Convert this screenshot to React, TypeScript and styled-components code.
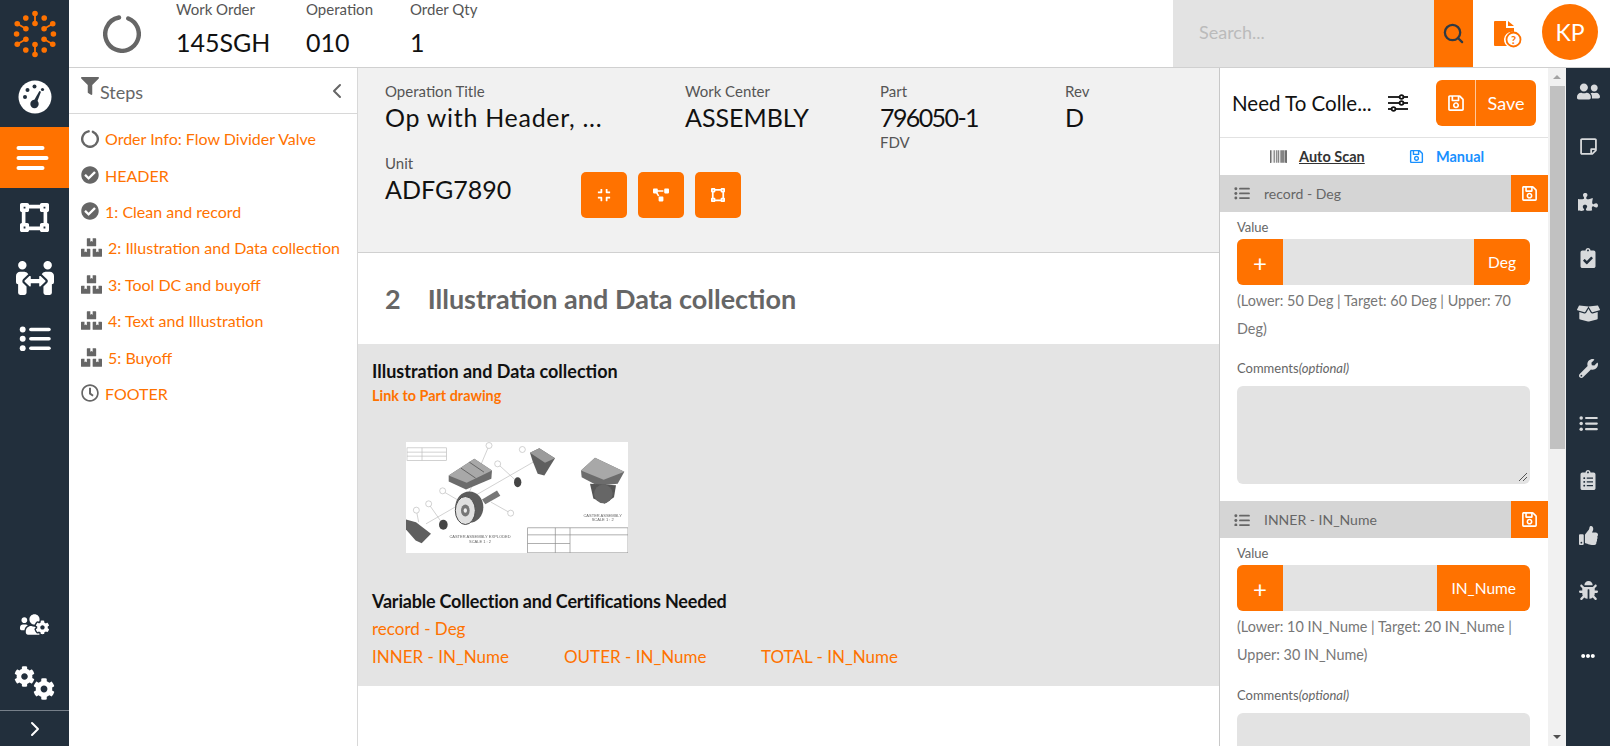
import React from 'react';
import styled, { createGlobalStyle } from 'styled-components';
import {
  FaBarcode,
  FaBoxes,
  FaBoxOpen,
  FaBug,
  FaCheckCircle,
  FaClipboardCheck,
  FaClipboardList,
  FaCog,
  FaCompress,
  FaEllipsisH,
  FaFilter,
  FaPeopleArrows,
  FaProjectDiagram,
  FaPuzzlePiece,
  FaRegClock,
  FaRegSave,
  FaRegStickyNote,
  FaThumbsUp,
  FaUserFriends,
  FaUsersCog,
  FaVectorSquare,
  FaWrench
} from 'react-icons/fa';
import { ChevronLeft, ChevronRight, Search } from 'lucide-react';

const ORANGE = '#ff7200';
const NAVY = '#222f3c';
const FONT = '"Lato", "Open Sans", sans-serif';

const GlobalStyle = createGlobalStyle`
  html, body, #root { margin: 0; padding: 0; height: 100%; }
  body { font-family: ${FONT}; overflow: hidden; background: #fff; }
  * { box-sizing: border-box; }
`;

const Page = styled.div`
  display: flex;
  height: 746px;
  width: 1610px;
`;

const LeftRail = styled.nav`
  width: 69px;
  flex: none;
  background: ${NAVY};
  display: flex;
  flex-direction: column;
  color: #fff;
`;

const LogoCell = styled.div`
  height: 67px;
  display: flex;
  align-items: center;
  justify-content: center;
`;

const RailItem = styled.div<{ $active?: boolean }>`
  height: 60.4px;
  display: flex;
  align-items: center;
  justify-content: center;
  background: ${(p) => (p.$active ? ORANGE : 'transparent')};
`;

const RailFoot = styled.div`
  margin-top: auto;
  display: flex;
  flex-direction: column;
`;

const RailFootItem = styled.div<{ $lift?: number }>`
  height: 55px;
  display: flex;
  align-items: center;
  justify-content: center;
  padding-bottom: ${(p) => p.$lift || 0}px;
`;

const RailToggle = styled.div`
  height: 36px;
  border-top: 1px solid #77808a;
  display: flex;
  align-items: center;
  justify-content: center;
`;

const Body = styled.div`
  flex: 1;
  min-width: 0;
  display: flex;
  flex-direction: column;
`;

const TopBar = styled.header`
  height: 68px;
  flex: none;
  display: flex;
  border-bottom: 1px solid #d0d0d0;
`;

const SpinnerCell = styled.div`
  width: 107px;
  flex: none;
  display: flex;
  align-items: center;
  justify-content: center;
  color: #666;
  padding-right: 2px;
`;

const TopField = styled.div<{ $width: number }>`
  width: ${(p) => p.$width}px;
  flex: none;
`;

const TopLabel = styled.div`
  font-size: 15px;
  line-height: 19px;
  color: #555;
`;

const TopValue = styled.div`
  font-size: 25px;
  line-height: 32px;
  margin-top: 7px;
  color: #111;
`;

const SearchBox = styled.div`
  margin-left: auto;
  width: 261px;
  background: #e3e3e3;
  color: #bbb;
  font-size: 18px;
  display: flex;
  align-items: center;
  padding: 0 0 4px 26px;
`;

const SearchButton = styled.div`
  width: 39px;
  background: ${ORANGE};
  color: #2f3a44;
  display: flex;
  align-items: center;
  justify-content: center;
`;

const DocHelp = styled.div`
  width: 69px;
  display: flex;
  align-items: center;
  justify-content: center;
  padding-right: 1px;
`;

const Avatar = styled.div`
  width: 56px;
  height: 56px;
  border-radius: 50%;
  background: ${ORANGE};
  color: #fff;
  font-size: 23px;
  display: flex;
  align-items: center;
  justify-content: center;
  margin: 4px 12px 0 0;
`;

const Columns = styled.div`
  flex: 1;
  min-height: 0;
  display: flex;
`;

const StepsPanel = styled.aside`
  width: 289px;
  flex: none;
  border-right: 1px solid #d8d8d8;
`;

const StepsHead = styled.div`
  height: 46px;
  border-bottom: 1px solid #d8d8d8;
  display: flex;
  align-items: center;
  padding: 0 8px 0 12px;
  color: #666;
  font-size: 18px;
`;

const FilterGlyph = styled.span`
  display: flex;
  margin-bottom: 9px;
`;

const StepsHeadTitle = styled.span`
  margin-left: 1px;
  flex: 1;
  padding-top: 2px;
`;

const StepsList = styled.ul`
  list-style: none;
  margin: 0;
  padding: 6.5px 0 0 12px;
`;

const StepRow = styled.li`
  height: 36.4px;
  display: flex;
  align-items: center;
  gap: 6px;
  color: ${ORANGE};
  font-size: 16px;
  white-space: nowrap;
`;

const StepIcon = styled.span`
  color: #666;
  display: flex;
  align-items: center;
`;

const Main = styled.main`
  flex: 1;
  min-width: 0;
  display: flex;
  flex-direction: column;
`;

const InfoBlock = styled.section`
  height: 185px;
  flex: none;
  background: #f1f1f1;
  border-bottom: 1px solid #d0d0d0;
  padding: 14px 0 0 27px;
`;

const InfoRow = styled.div`
  display: flex;
`;

const InfoField = styled.div<{ $width: number }>`
  width: ${(p) => p.$width}px;
  flex: none;
`;

const InfoLabel = styled.div`
  font-size: 15px;
  line-height: 19px;
  color: #555;
`;

const InfoValue = styled.div<{ $spacing?: number }>`
  font-size: 25px;
  line-height: 30px;
  margin-top: 1px;
  color: #111;
  white-space: nowrap;
  letter-spacing: ${(p) => p.$spacing || 0}px;
`;

const InfoSub = styled.div`
  font-size: 15px;
  line-height: 21px;
  color: #555;
`;

const InfoRowSecond = styled(InfoRow)`
  margin-top: 1px;
`;

const InfoFirst = styled.div`
  min-height: 71px;
`;

const ActionGroup = styled.div`
  display: flex;
  gap: 11px;
  margin-top: 18px;
`;

const ActionButton = styled.button`
  width: 46px;
  height: 46px;
  border: 0;
  border-radius: 5px;
  padding: 0;
  color: #fff;
  background: ${ORANGE};
  display: flex;
  align-items: center;
  justify-content: center;
`;

const StepTitle = styled.h2`
  height: 91px;
  flex: none;
  margin: 0;
  padding-left: 27px;
  display: flex;
  align-items: center;
  gap: 27px;
  color: #666;
  font-size: 27px;
  font-weight: 700;
`;

const Instruction = styled.section`
  height: 342px;
  flex: none;
  background: #e4e4e4;
  padding: 16px 14px 0;
`;

const InstructionTitle = styled.div<{ $spacing?: number }>`
  font-size: 18px;
  line-height: 23px;
  font-weight: 700;
  color: #111;
  letter-spacing: ${(p) => p.$spacing || 0}px;
`;

const DrawingLink = styled.div`
  font-size: 14.4px;
  line-height: 20px;
  font-weight: 700;
  color: ${ORANGE};
  margin-top: 3px;
`;

const Drawing = styled.div`
  width: 222px;
  height: 111px;
  margin: 36px 0 37px 34px;
  background: #fff;
`;

const VarRow = styled.div`
  display: flex;
  font-size: 17px;
  line-height: 28px;
  color: ${ORANGE};
`;

const VarCell = styled.div<{ $width?: number }>`
  width: ${(p) => p.$width || 192}px;
  flex: none;
  white-space: nowrap;
`;

const VarTitleGap = styled.div`
  height: 2px;
`;

const CollectPanel = styled.aside`
  width: 347px;
  flex: none;
  border-left: 1px solid #c8c8c8;
  display: flex;
  min-height: 0;
`;

const CollectBody = styled.div`
  flex: 1;
  min-width: 0;
  overflow: hidden;
`;

const ScrollRail = styled.div`
  width: 18px;
  flex: none;
  background: #f1f1f1;
  display: flex;
  flex-direction: column;
  align-items: center;
`;

const ScrollArrow = styled.div<{ $down?: boolean }>`
  height: 18px;
  flex: none;
  display: flex;
  align-items: center;
  justify-content: center;
  margin-top: ${(p) => (p.$down ? 'auto' : 0)};

  &::before {
    content: '';
    border-left: 4px solid transparent;
    border-right: 4px solid transparent;
    border-top: ${(p) => (p.$down ? '4px solid #505050' : 0)};
    border-bottom: ${(p) => (p.$down ? 0 : '4px solid #a3a3a3')};
  }
`;

const ScrollThumb = styled.div`
  width: 15px;
  height: 363px;
  background: #c1c1c1;
`;

const CollectHead = styled.div`
  height: 70px;
  border-bottom: 1px solid #e2e2e2;
  display: flex;
  align-items: center;
  padding: 0 12px;
`;

const CollectTitle = styled.div`
  font-size: 20.5px;
  color: #111;
  width: 156px;
  white-space: nowrap;
`;

const SaveGroup = styled.div`
  margin-left: auto;
  width: 100px;
  height: 46px;
  background: ${ORANGE};
  border-radius: 6px;
  color: #fff;
  display: flex;
`;

const SaveIconCell = styled.div`
  width: 40px;
  border-right: 1px solid #ffc79a;
  display: flex;
  align-items: center;
  justify-content: center;
`;

const SaveText = styled.div`
  flex: 1;
  font-size: 18px;
  display: flex;
  align-items: center;
  justify-content: center;
`;

const ModeTabs = styled.div`
  height: 37px;
  display: flex;
  align-items: center;
  padding-left: 50px;
  font-size: 14.5px;
  font-weight: 700;
`;

const ModeTab = styled.div<{ $active?: boolean }>`
  width: 167px;
  display: flex;
  align-items: center;
  gap: 12px;
  color: ${(p) => (p.$active ? '#1890ff' : '#333')};

  span {
    text-decoration: ${(p) => (p.$active ? 'none' : 'underline')};
  }
`;

const VarHead = styled.div`
  height: 37px;
  background: #d5d5d5;
  display: flex;
  align-items: center;
  padding-left: 14px;
  gap: 14px;
  color: #666;
  font-size: 14px;
`;

const VarSave = styled.div`
  margin-left: auto;
  width: 37px;
  align-self: stretch;
  background: ${ORANGE};
  color: #fff;
  display: flex;
  align-items: center;
  justify-content: center;
`;

const VarBody = styled.div`
  padding: 6px 18px 17px 17px;
`;

const SmallLabel = styled.div`
  font-size: 13px;
  line-height: 18px;
  color: #666;
  em {
    font-style: italic;
  }
`;

const ValueInput = styled.div`
  height: 46px;
  margin-top: 3px;
  display: flex;
  background: #e3e3e3;
  border-radius: 6px;
  overflow: hidden;
  color: #fff;
`;

const PlusButton = styled.div`
  width: 46px;
  background: ${ORANGE};
  font-size: 24px;
  display: flex;
  align-items: center;
  justify-content: center;
`;

const UnitAddon = styled.div`
  margin-left: auto;
  padding: 0 14px;
  background: ${ORANGE};
  font-size: 15.5px;
  display: flex;
  align-items: center;
`;

const Limits = styled.div`
  font-size: 14.4px;
  line-height: 27.7px;
  color: #777;
  margin: 2px 0 17px;
`;

const CommentBox = styled.div`
  height: 98px;
  margin-top: 9px;
  background: #e3e3e3;
  border-radius: 6px;
  position: relative;
`;

const ResizeGrip = styled.svg`
  position: absolute;
  right: 2px;
  bottom: 2px;
`;

const RightRail = styled.nav`
  width: 44px;
  flex: none;
  background: ${NAVY};
  color: #d8dadc;
  display: flex;
  flex-direction: column;
  align-items: center;
  padding-top: 12px;
  gap: 33.5px;
`;

const RailGlyph = styled.div`
  height: 22px;
  display: flex;
  align-items: center;
  justify-content: center;
`;

const RailMore = styled(RailGlyph)`
  margin-top: 10px;
  color: #fff;
`;

// brand mark: six two-dot spokes with single dots between them
const Logo = () => {
  const spokes = [-90, -30, 30, 90, 150, 210];
  const point = (deg: number, r: number) => ({
    x: 32 + r * Math.cos((deg * Math.PI) / 180),
    y: 32 + r * Math.sin((deg * Math.PI) / 180)
  });
  return (
    <svg width="64" height="64" viewBox="0 0 64 64" fill={ORANGE} stroke={ORANGE}>
      {spokes.map((deg) => {
        const a = point(deg, 10.5);
        const b = point(deg, 20.5);
        const between = point(deg + 30, 18.4);
        return (
          <g key={deg}>
            <line x1={a.x} y1={a.y} x2={b.x} y2={b.y} strokeWidth="1.8" />
            <circle cx={a.x} cy={a.y} r="2.8" stroke="none" />
            <circle cx={b.x} cy={b.y} r="2.8" stroke="none" />
            <circle cx={between.x} cy={between.y} r="2.8" stroke="none" />
          </g>
        );
      })}
    </svg>
  );
};

const Ring = ({ size, stroke }: { size: number; stroke: number }) => (
  <svg width={size} height={size} viewBox={`0 0 ${size} ${size}`} fill="none" stroke="currentColor" strokeWidth={stroke}>
    <circle
      cx={size / 2}
      cy={size / 2}
      r={(size - stroke) / 2}
      pathLength={100}
      strokeDasharray="91 9"
      strokeLinecap="round"
      transform={`rotate(-68 ${size / 2} ${size / 2})`}
    />
  </svg>
);

const GaugeIcon = () => (
  <svg width="34" height="34" viewBox="0 0 34 34">
    <circle cx="17" cy="17" r="16.5" fill="#fff" />
    <g fill={NAVY}>
      <circle cx="7" cy="17" r="2" />
      <circle cx="9.5" cy="10" r="2" />
      <circle cx="16.5" cy="6.5" r="2" />
      <circle cx="24.5" cy="9.5" r="1.6" />
      <circle cx="16.5" cy="24" r="4.2" />
      <path d="M14.8 22.5l6.6-11.5 1.6.8-4.6 12.2z" />
    </g>
  </svg>
);

const MenuIcon = () => (
  <svg width="38" height="26" viewBox="0 0 38 26" stroke="#fff" strokeWidth="4" strokeLinecap="round">
    <line x1="2.5" y1="3" x2="26.5" y2="3" />
    <line x1="2.5" y1="13" x2="30.5" y2="13" />
    <line x1="2.5" y1="23" x2="26.5" y2="23" />
  </svg>
);

const TwoGears = () => (
  <svg width="42" height="34" viewBox="0 0 42 34" fill="#fff">
    <FaCog x={0} y={0} size={21} />
    <FaCog x={19} y={12} size={22} />
  </svg>
);

const ListIcon = ({ size }: { size: number }) => (
  <svg width={size} height={size * 0.8} viewBox="0 0 32 26" fill="currentColor">
    <circle cx="3.5" cy="3.5" r="3" />
    <circle cx="3.5" cy="13" r="3" />
    <circle cx="3.5" cy="22.5" r="3" />
    <rect x="10" y="1.7" width="22" height="3.6" rx="1.8" />
    <rect x="10" y="11.2" width="22" height="3.6" rx="1.8" />
    <rect x="10" y="20.7" width="22" height="3.6" rx="1.8" />
  </svg>
);

const SlidersIcon = () => (
  <svg width="20" height="18" viewBox="0 0 20 18" fill="none" stroke="#111" strokeWidth="1.8">
    <line x1="0" y1="3" x2="20" y2="3" />
    <line x1="0" y1="9" x2="20" y2="9" />
    <line x1="0" y1="15" x2="20" y2="15" />
    <circle cx="13.5" cy="3" r="1.9" fill="#fff" />
    <circle cx="13.5" cy="9" r="1.9" fill="#fff" />
    <circle cx="5.5" cy="15" r="1.9" fill="#fff" />
  </svg>
);

const DocQuestion = () => (
  <svg width="29" height="28" viewBox="0 0 29 28">
    <path d="M1 2a1 1 0 0 1 1-1h11v7h8v4a8 8 0 0 0-7 14H2a1 1 0 0 1-1-1z" fill={ORANGE} />
    <path d="M15 1l6 5h-6z" fill={ORANGE} />
    <circle cx="20.5" cy="19.5" r="7" fill="#fff" stroke={ORANGE} strokeWidth="1.8" />
    <text x="20.5" y="23.5" textAnchor="middle" fontSize="11" fontWeight="700" fontFamily="Lato" fill={ORANGE}>
      ?
    </text>
  </svg>
);

const CasterDrawing = () => (
  <svg width="222" height="111" viewBox="0 0 666 332">
    <defs>
      <filter id="soft">
        <feGaussianBlur stdDeviation="1.8" />
      </filter>
    </defs>
    <g filter="url(#soft)">
      <g fill="none" stroke="#bbb" strokeWidth="2">
        <rect x="3" y="17" width="118" height="38" />
        <line x1="48" y1="17" x2="48" y2="55" />
        <line x1="3" y1="30" x2="121" y2="30" />
        <line x1="3" y1="42" x2="121" y2="42" />
        <line x1="249" y1="10" x2="190" y2="150" />
        <line x1="390" y1="55" x2="60" y2="245" />
        <line x1="275" y1="65" x2="335" y2="120" />
        <line x1="110" y1="147" x2="175" y2="185" />
        <line x1="68" y1="185" x2="110" y2="245" />
        <line x1="31" y1="204" x2="38" y2="240" />
        <line x1="255" y1="180" x2="314" y2="213" />
        <circle cx="249" cy="10" r="9" fill="#fff" />
        <circle cx="349" cy="22" r="9" fill="#fff" />
        <circle cx="275" cy="65" r="9" fill="#fff" />
        <circle cx="110" cy="146" r="9" fill="#fff" />
        <circle cx="68" cy="185" r="9" fill="#fff" />
        <circle cx="31" cy="204" r="9" fill="#fff" />
        <circle cx="314" cy="213" r="9" fill="#fff" />
      </g>
      <path d="M128 100l77-50 53 35-2 25-76 32-52-24z" fill="#6c6c6c" />
      <path d="M128 100l77-50 53 35-76 37z" fill="#a8a8a8" />
      <path d="M165 78l44 30M190 60l44 30" stroke="#666" strokeWidth="3" />
      <path d="M372 32l28-14 47 30-32 52-20-5-15-38z" fill="#5f5f5f" />
      <path d="M372 32l28-14 47 30-30 14z" fill="#9b9b9b" />
      <ellipse cx="190" cy="195" rx="42" ry="47" fill="#5c5c5c" />
      <ellipse cx="178" cy="205" rx="30" ry="42" fill="#e0e0e0" stroke="#444" strokeWidth="3" />
      <ellipse cx="178" cy="205" rx="13" ry="18" fill="#777" />
      <ellipse cx="178" cy="205" rx="5" ry="7" fill="#eee" />
      <path d="M228 172l45-27 10 16-45 25z" fill="#777" />
      <ellipse cx="335" cy="120" rx="11" ry="15" fill="#444" />
      <ellipse cx="112" cy="248" rx="13" ry="15" fill="#444" />
      <path d="M0 232l30 8 45 35-28 28-18-8L0 262z" fill="#5f5f5f" />
      <path d="M525 85l42-38 88 42-20 36-60 6-48-26z" fill="#6c6c6c" />
      <path d="M525 85l42-38 88 42-62 24z" fill="#a8a8a8" />
      <path d="M552 125l78 4-6 36-28 20-34-16z" fill="#555" />
      <ellipse cx="592" cy="155" rx="28" ry="28" fill="#666" />
      <g fill="none" stroke="#888" strokeWidth="2">
        <rect x="365" y="257" width="301" height="75" />
        <line x1="365" y1="278" x2="666" y2="278" />
        <line x1="365" y1="304" x2="492" y2="304" />
        <line x1="448" y1="257" x2="448" y2="332" />
        <line x1="492" y1="257" x2="492" y2="332" />
      </g>
      <g fontFamily="Liberation Sans, sans-serif" fontSize="12" fill="#666" textAnchor="middle">
        <text x="222" y="288">CASTER ASSEMBLY EXPLODED</text>
        <text x="222" y="302">SCALE 1 : 2</text>
        <text x="590" y="224">CASTER ASSEMBLY</text>
        <text x="590" y="238">SCALE 1 : 2</text>
      </g>
    </g>
  </svg>
);

const steps = [
  { icon: <Ring size={18} stroke={2.4} />, label: 'Order Info: Flow Divider Valve' },
  { icon: <FaCheckCircle size={18} />, label: 'HEADER' },
  { icon: <FaCheckCircle size={18} />, label: '1: Clean and record' },
  { icon: <FaBoxes size={21} />, label: '2: Illustration and Data collection' },
  { icon: <FaBoxes size={21} />, label: '3: Tool DC and buyoff' },
  { icon: <FaBoxes size={21} />, label: '4: Text and Illustration' },
  { icon: <FaBoxes size={21} />, label: '5: Buyoff' },
  { icon: <FaRegClock size={18} />, label: 'FOOTER' }
];

const variables = [
  { name: 'record - Deg', unit: 'Deg', limits: '(Lower: 50 Deg | Target: 60 Deg | Upper: 70 Deg)' },
  { name: 'INNER - IN_Nume', unit: 'IN_Nume', limits: '(Lower: 10 IN_Nume | Target: 20 IN_Nume | Upper: 30 IN_Nume)' }
];

export default function App() {
  return (
    <Page>
      <GlobalStyle />
      <LeftRail>
        <LogoCell>
          <Logo />
        </LogoCell>
        <RailItem><GaugeIcon /></RailItem>
        <RailItem $active><MenuIcon /></RailItem>
        <RailItem><FaVectorSquare size={29} /></RailItem>
        <RailItem><FaPeopleArrows size={38} /></RailItem>
        <RailItem><ListIcon size={32} /></RailItem>
        <RailFoot>
          <RailFootItem $lift={6}><FaUsersCog size={29} /></RailFootItem>
          <RailFootItem><TwoGears /></RailFootItem>
          <RailToggle><ChevronRight size={24} strokeWidth={2} /></RailToggle>
        </RailFoot>
      </LeftRail>
      <Body>
        <TopBar>
          <SpinnerCell>
            <Ring size={38} stroke={4.4} />
          </SpinnerCell>
          <TopField $width={130}>
            <TopLabel>Work Order</TopLabel>
            <TopValue>145SGH</TopValue>
          </TopField>
          <TopField $width={104}>
            <TopLabel>Operation</TopLabel>
            <TopValue>010</TopValue>
          </TopField>
          <TopField $width={100}>
            <TopLabel>Order Qty</TopLabel>
            <TopValue>1</TopValue>
          </TopField>
          <SearchBox>Search...</SearchBox>
          <SearchButton><Search size={23} strokeWidth={2.4} /></SearchButton>
          <DocHelp><DocQuestion /></DocHelp>
          <Avatar>KP</Avatar>
        </TopBar>
        <Columns>
          <StepsPanel>
            <StepsHead>
              <FilterGlyph><FaFilter size={18} /></FilterGlyph>
              <StepsHeadTitle>Steps</StepsHeadTitle>
              <ChevronLeft size={24} strokeWidth={2} />
            </StepsHead>
            <StepsList>
              {steps.map((step) => (
                <StepRow key={step.label}>
                  <StepIcon>{step.icon}</StepIcon>
                  {step.label}
                </StepRow>
              ))}
            </StepsList>
          </StepsPanel>
          <Main>
            <InfoBlock>
              <InfoFirst>
                <InfoRow>
                  <InfoField $width={300}>
                    <InfoLabel>Operation Title</InfoLabel>
                    <InfoValue $spacing={0.7}>Op with Header, ...</InfoValue>
                  </InfoField>
                  <InfoField $width={195}>
                    <InfoLabel>Work Center</InfoLabel>
                    <InfoValue>ASSEMBLY</InfoValue>
                  </InfoField>
                  <InfoField $width={185}>
                    <InfoLabel>Part</InfoLabel>
                    <InfoValue $spacing={-1.6}>796050-1</InfoValue>
                    <InfoSub>FDV</InfoSub>
                  </InfoField>
                  <InfoField $width={100}>
                    <InfoLabel>Rev</InfoLabel>
                    <InfoValue>D</InfoValue>
                  </InfoField>
                </InfoRow>
              </InfoFirst>
              <InfoRowSecond>
                <InfoField $width={196}>
                  <InfoLabel>Unit</InfoLabel>
                  <InfoValue>ADFG7890</InfoValue>
                </InfoField>
                <ActionGroup>
                  <ActionButton><FaCompress size={14} /></ActionButton>
                  <ActionButton><FaProjectDiagram size={16} /></ActionButton>
                  <ActionButton><FaVectorSquare size={14} /></ActionButton>
                </ActionGroup>
              </InfoRowSecond>
            </InfoBlock>
            <StepTitle>
              <span>2</span>
              <span>Illustration and Data collection</span>
            </StepTitle>
            <Instruction>
              <InstructionTitle>Illustration and Data collection</InstructionTitle>
              <DrawingLink>Link to Part drawing</DrawingLink>
              <Drawing>
                <CasterDrawing />
              </Drawing>
              <InstructionTitle $spacing={-0.2}>Variable Collection and Certifications Needed</InstructionTitle>
              <VarTitleGap />
              <VarRow>
                <VarCell>record - Deg</VarCell>
              </VarRow>
              <VarRow>
                <VarCell>INNER - IN_Nume</VarCell>
                <VarCell $width={197}>OUTER - IN_Nume</VarCell>
                <VarCell>TOTAL - IN_Nume</VarCell>
              </VarRow>
            </Instruction>
          </Main>
          <CollectPanel>
            <CollectBody>
              <CollectHead>
                <CollectTitle>Need To Colle...</CollectTitle>
                <SlidersIcon />
                <SaveGroup>
                  <SaveIconCell><FaRegSave size={18} /></SaveIconCell>
                  <SaveText>Save</SaveText>
                </SaveGroup>
              </CollectHead>
              <ModeTabs>
                <ModeTab>
                  <FaBarcode size={17} />
                  <span>Auto Scan</span>
                </ModeTab>
                <ModeTab $active>
                  <FaRegSave size={15} />
                  <span>Manual</span>
                </ModeTab>
              </ModeTabs>
              {variables.map((v) => (
                <div key={v.name}>
                  <VarHead>
                    <ListIcon size={16} />
                    {v.name}
                    <VarSave><FaRegSave size={17} /></VarSave>
                  </VarHead>
                  <VarBody>
                    <SmallLabel>Value</SmallLabel>
                    <ValueInput>
                      <PlusButton>+</PlusButton>
                      <UnitAddon>{v.unit}</UnitAddon>
                    </ValueInput>
                    <Limits>{v.limits}</Limits>
                    <SmallLabel>
                      Comments<em>(optional)</em>
                    </SmallLabel>
                    <CommentBox>
                      <ResizeGrip width="10" height="10" viewBox="0 0 10 10" stroke="#555" strokeWidth="1">
                        <line x1="1" y1="9" x2="9" y2="1" />
                        <line x1="5" y1="9" x2="9" y2="5" />
                      </ResizeGrip>
                    </CommentBox>
                  </VarBody>
                </div>
              ))}
            </CollectBody>
            <ScrollRail>
              <ScrollArrow />
              <ScrollThumb />
              <ScrollArrow $down />
            </ScrollRail>
          </CollectPanel>
          <RightRail>
            <RailGlyph><FaUserFriends size={23} /></RailGlyph>
            <RailGlyph><FaRegStickyNote size={19} /></RailGlyph>
            <RailGlyph><FaPuzzlePiece size={20} /></RailGlyph>
            <RailGlyph><FaClipboardCheck size={20} /></RailGlyph>
            <RailGlyph><FaBoxOpen size={23} /></RailGlyph>
            <RailGlyph><FaWrench size={19} /></RailGlyph>
            <RailGlyph><ListIcon size={19} /></RailGlyph>
            <RailGlyph><FaClipboardList size={20} /></RailGlyph>
            <RailGlyph><FaThumbsUp size={19} /></RailGlyph>
            <RailGlyph><FaBug size={19} /></RailGlyph>
            <RailMore><FaEllipsisH size={14} /></RailMore>
          </RightRail>
        </Columns>
      </Body>
    </Page>
  );
}
